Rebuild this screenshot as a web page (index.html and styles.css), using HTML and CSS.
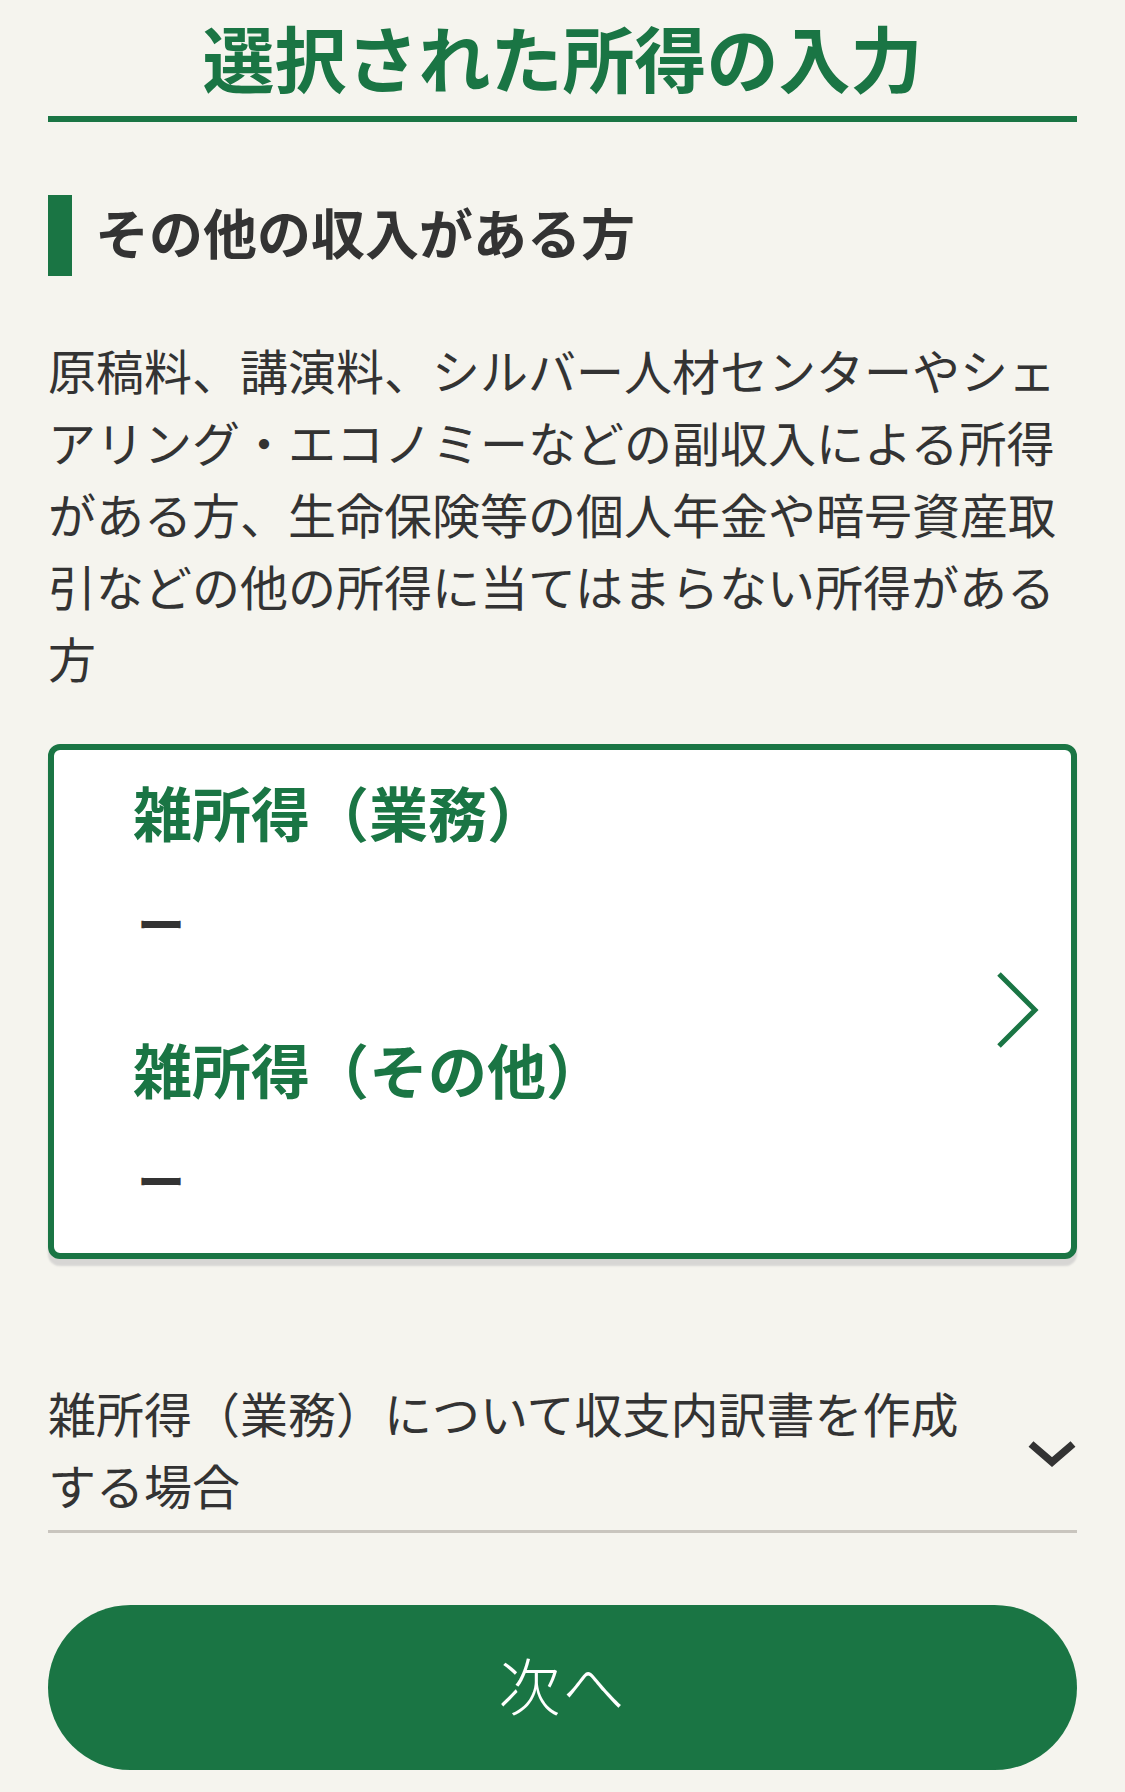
FILE: index.html
```html
<!DOCTYPE html>
<html lang="ja">
<head>
<meta charset="utf-8">
<title>選択された所得の入力</title>
<link rel="stylesheet" href="styles.css">
</head>
<body>
<main class="page">
  <h1 class="page-title">選択された所得の入力</h1>

  <h2 class="section-title"><span class="section-bar"></span><span class="section-text">その他の収入がある方</span></h2>

  <p class="lead">原稿料、講演料、シルバー人材センターやシェアリング・エコノミーなどの副収入による所得がある方、生命保険等の個人年金や暗号資産取引などの他の所得に当てはまらない所得がある方</p>

  <a class="income-card" href="#">
    <div class="income-list">
      <div class="income-item">
        <div class="income-label">雑所得（業務）</div>
        <div class="income-value">ー</div>
      </div>
      <div class="income-item">
        <div class="income-label">雑所得（その他）</div>
        <div class="income-value">ー</div>
      </div>
    </div>
    <svg class="card-chevron" width="44" height="80" viewBox="0 0 44 80" aria-hidden="true">
      <polyline points="4,4 40,40 4,76" fill="none" stroke="#1a7544" stroke-width="5" stroke-linejoin="miter"/>
    </svg>
  </a>

  <div class="accordion">
    <div class="accordion-text">雑所得（業務）について収支内訳書を作成する場合</div>
    <svg class="accordion-chevron" width="50" height="26" viewBox="0 0 50 26" aria-hidden="true">
      <polyline points="4,3 25,21 46,3" fill="none" stroke="#333333" stroke-width="7.5"/>
    </svg>
  </div>

  <button class="next-button" type="button">次へ</button>
</main>
</body>
</html>
```

FILE: styles.css
```css
* {
  box-sizing: border-box;
}

html, body {
  margin: 0;
  padding: 0;
  background: #f5f4ee;
}

body {
  font-family: "Noto Sans CJK JP", "Noto Sans", sans-serif;
  color: #333333;
}

.page {
  padding: 0 48px 22px;
}

.page-title {
  margin: 0;
  padding: 6px 0 10px;
  font-size: 72px;
  line-height: 100px;
  font-weight: 700;
  color: #1a7544;
  text-align: center;
  border-bottom: 6px solid #1a7544;
}

.section-title {
  margin: 73px 0 0;
  display: flex;
  align-items: center;
  gap: 23px;
  font-size: 54px;
  font-weight: 700;
  color: #333333;
}

.section-bar {
  width: 24px;
  height: 81px;
  background: #1a7544;
  flex: none;
}

.section-text {
  line-height: 1.2;
  padding-bottom: 6px;
}

.lead {
  margin: 57px 0 0;
  font-size: 48px;
  line-height: 72px;
  color: #333333;
}

.income-card {
  margin-top: 51px;
  display: flex;
  align-items: center;
  background: #ffffff;
  border: 6px solid #1a7544;
  border-radius: 12px;
  box-shadow: 0 7px 2px rgba(60, 60, 80, 0.16);
  padding: 21px 32px 38px 79px;
  text-decoration: none;
}

.income-list {
  flex: 1;
  display: flex;
  flex-direction: column;
  gap: 70px;
}

.income-label {
  font-size: 59px;
  line-height: 81px;
  font-weight: 700;
  color: #1a7544;
  margin-bottom: 34px;
}

.income-value {
  font-size: 48px;
  line-height: 72px;
  font-weight: 700;
  color: #333333;
  padding-left: 4px;
}

.card-chevron {
  flex: none;
  margin-top: 33px;
}

.accordion {
  margin-top: 117px;
  display: flex;
  align-items: center;
  gap: 40px;
  padding-bottom: 10px;
  border-bottom: 3px solid #c9c5be;
}

.accordion-text {
  flex: 1;
  font-size: 48px;
  line-height: 72px;
  color: #333333;
}

.accordion-chevron {
  flex: none;
  margin-top: 12px;
}

.next-button {
  display: block;
  width: 100%;
  margin-top: 72px;
  height: 165px;
  border: none;
  border-radius: 83px;
  background: #1a7544;
  color: #ffffff;
  font-family: "Noto Sans CJK JP", "Noto Sans", sans-serif;
  font-size: 62px;
  font-weight: 300;
  letter-spacing: 2px;
  padding-bottom: 8px;
}
```
